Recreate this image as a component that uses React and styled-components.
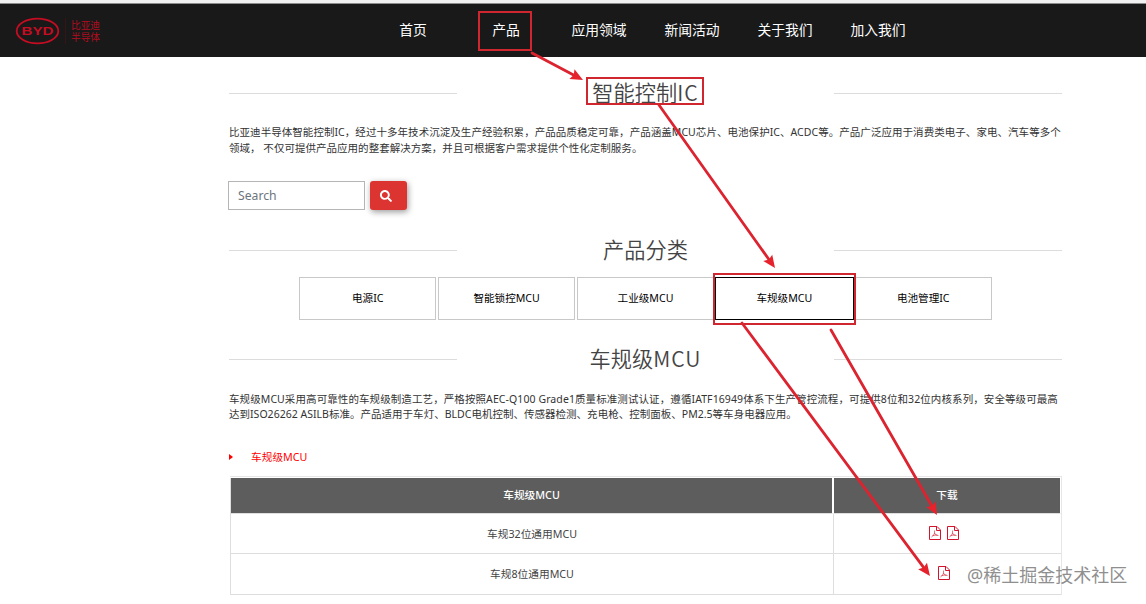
import React from "react";
import styled, { createGlobalStyle } from "styled-components";
import { FaSearch } from "react-icons/fa";

const GlobalStyle = createGlobalStyle`
  * {
    box-sizing: border-box;
  }

  body {
    margin: 0;
    background: #fff;
    overflow: hidden;
    font-family: "Noto Sans", "Noto Sans CJK SC", sans-serif;
    font-size: 10.5px;
    color: #333;
  }
`;

const Page = styled.div`
  position: relative;
  width: 1146px;
  height: 604px;
  overflow: hidden;
`;

const NavBar = styled.header`
  display: flex;
  align-items: center;
  height: 57px;
  padding-left: 15px;
  border-top: 3px solid #f1f1f1;
  background: #191919;
  box-shadow: inset 0 1px 0 #8c8c8c;
`;

const Brand = styled.a`
  display: flex;
  align-items: center;
  width: 351.5px;
  padding-top: 1px;
`;

const BrandName = styled.span`
  margin-left: 5px;
  padding: 2px 0 0 5px;
  border-left: 1px solid #38131a;
  font-size: 9.7px;
  line-height: 12px;
  color: #b00d20;
`;

const Menu = styled.nav`
  display: grid;
  grid-template-columns: repeat(6, 93px);
`;

const MenuItem = styled.a`
  text-align: center;
  font-size: 13.8px;
  line-height: 20px;
  color: #fff;
`;

const Container = styled.main`
  width: 833px;
  margin-left: 229px;
`;

const TitleRow = styled.div`
  display: grid;
  grid-template-columns: 228px 1fr 228px;
  align-items: center;
  height: 30px;
  margin-top: ${(props) => props.$top}px;
`;

const Rule = styled.span`
  height: 1px;
  background: #dcdcdc;
`;

const Title = styled.h2`
  margin: 0;
  padding-bottom: 2px;
  text-align: center;
  font-family: "Noto Sans CJK SC", sans-serif;
  font-size: 21.2px;
  font-weight: 350;
  line-height: 28px;
  color: #444;
`;

const Latin = styled.span`
  letter-spacing: 1px;
`;

const Text = styled.p`
  margin: ${(props) => props.$top}px 0 0;
  line-height: ${(props) => props.$line}px;
  white-space: nowrap;
`;

const Line = styled.span`
  display: block;
  letter-spacing: ${(props) => props.$spacing}px;
`;

const SearchForm = styled.div`
  display: flex;
  gap: 5px;
  margin: 25px 0 0 -1px;
`;

const SearchInput = styled.input`
  width: 137px;
  height: 29px;
  padding: 0 9px;
  border: 1px solid #b5b5b5;
  border-radius: 0;
  font-family: "Noto Sans", sans-serif;
  font-size: 12.2px;

  &::placeholder {
    color: #6c757d;
  }
`;

const SearchButton = styled.button`
  display: flex;
  align-items: center;
  width: 37px;
  height: 29px;
  padding: 0 0 0 10px;
  border: 0;
  border-radius: 3px;
  background: #dc3531;
  box-shadow: 1px 2px 6px rgba(0, 0, 0, 0.4);
  color: #fff;
`;

const Tabs = styled.div`
  display: grid;
  grid-template-columns: repeat(5, 1fr);
  gap: 1.4px;
  width: 693px;
  margin: 12px 0 0 70px;
`;

const Tab = styled.button`
  height: 43px;
  margin: 0 ${(props) => (props.$active ? "-1px" : 0)};
  padding: 0 0 2px;
  border: 1px solid ${(props) => (props.$active ? "#000" : "#c8c8c8")};
  background: #fff;
  font-family: inherit;
  font-size: 10.6px;
  color: #000;
`;

const SeriesLink = styled.a`
  display: flex;
  align-items: center;
  gap: 18px;
  height: 16px;
  margin-top: 26px;
  font-size: 10.7px;
  color: #f00;
`;

const Caret = styled.i`
  margin-top: 1px;
  border: 3px solid transparent;
  border-left: 4px solid #f00;
  border-right: 0;
`;

const Table = styled.div`
  display: grid;
  grid-template-columns: 603px 228px;
  grid-template-rows: 36px 40px 41px;
  width: 832px;
  margin: 12px 0 0 1px;
  padding-top: 1px;
  border-top: 1px solid #e6e6e6;
  border-right: 1px solid #e6e6e6;
`;

const Cell = styled.div`
  display: flex;
  align-items: center;
  justify-content: center;
  gap: 6px;
  padding-bottom: 1px;
  border-left: 1px solid #dedede;
  border-bottom: 1px solid #dedede;
  font-size: 10.7px;
  color: #444;
`;

const FileCell = styled(Cell)`
  padding: 0 8px 2px 0;
`;

const HeadCell = styled(Cell)`
  padding-bottom: 2px;
  border-left-color: ${(props) => (props.$first ? "#dedede" : "#fff")};
  border-right: 1px solid #fff;
  background: #5d5d5d;
  font-weight: 500;
  color: #fff;
`;

const Overlay = styled.svg`
  position: absolute;
  top: 0;
  left: 0;
  pointer-events: none;
`;

const Watermark = styled.span`
  position: absolute;
  left: 967px;
  top: 562px;
  font-size: 18px;
  line-height: 26px;
  white-space: nowrap;
  color: #8f8f8f;
`;

const menu = ["首页", "产品", "应用领域", "新闻活动", "关于我们", "加入我们"];
const tabs = ["电源IC", "智能锁控MCU", "工业级MCU", "车规级MCU", "电池管理IC"];
const products = [
  { name: "车规32位通用MCU", files: 2 },
  { name: "车规8位通用MCU", files: 1 },
];

const boxes = [
  [479, 12, 52, 38],
  [587, 78, 116, 26],
  [714, 274, 141, 50],
];
const arrows = [
  [532, 53, 583, 80],
  [659, 105, 775, 268],
  [742, 323, 930, 576],
  [831, 330, 937, 515],
];

function Logo() {
  return (
    <svg width="45" height="28" viewBox="0 0 45 28">
      <ellipse cx="22.5" cy="14" rx="20.8" ry="12.4" fill="none" stroke="#c40d22" strokeWidth="1.8" />
      <text
        x="6.5"
        y="17.600"
        textLength="32"
        lengthAdjust="spacingAndGlyphs"
        fontFamily="Liberation Sans"
        fontWeight="700"
        fontSize="11"
        fill="#c40d22"
      >
        BYD
      </text>
    </svg>
  );
}

function PdfIcon() {
  return (
    <svg width="12" height="14" viewBox="0 0 12 14" fill="none" stroke="#d4142c">
      <path d="M.5.5h7.5l3.500 3.500v9.500H.5z" />
      <path d="M7.500.5v4h4" />
      <path d="M5.500 4.500v2.500c0 1-1.500 3-3 4M5.500 7c.5 1.500 2 2.500 4 2.500M3.500 9.800c1.500-.5 3-.8 5-.8" strokeWidth=".6" />
    </svg>
  );
}

function SectionTitle({ top, latin, children }) {
  return (
    <TitleRow $top={top}>
      <Rule />
      <Title>
        {children}
        {latin && <Latin>{latin}</Latin>}
      </Title>
      <Rule />
    </TitleRow>
  );
}

function Arrow({ points }) {
  const [x1, y1, x2, y2] = points;
  const length = Math.hypot(x2 - x1, y2 - y1);
  const angle = (Math.atan2(y2 - y1, x2 - x1) * 180) / Math.PI;

  return (
    <g transform={`translate(${x1} ${y1}) rotate(${angle})`}>
      <path d={`M0 0H${length - 8}`} stroke="#dc2430" strokeWidth="2.8" strokeLinecap="round" />
      <path d={`M${length} 0l-12.500-5.500 2 5.500-2 5.500z`} fill="#e6222c" />
    </g>
  );
}

export default function App() {
  return (
    <Page>
      <GlobalStyle />
      <NavBar>
        <Brand>
          <Logo />
          <BrandName>
            比亚迪
            <br />
            半导体
          </BrandName>
        </Brand>
        <Menu>
          {menu.map((item) => (
            <MenuItem key={item}>{item}</MenuItem>
          ))}
        </Menu>
      </NavBar>

      <Container>
        <SectionTitle top={21} latin="IC">
          智能控制
        </SectionTitle>
        <Text $top={16} $line={16}>
          <Line $spacing={0.05}>
            比亚迪半导体智能控制IC，经过十多年技术沉淀及生产经验积累，产品品质稳定可靠，产品涵盖MCU芯片、电池保护IC、ACDC等。产品广泛应用于消费类电子、家电、汽车等多个
          </Line>
          <Line $spacing={0.03}>
            领域， 不仅可提供产品应用的整套解决方案，并且可根据客户需求提供个性化定制服务。
          </Line>
        </Text>

        <SearchForm>
          <SearchInput placeholder="Search" />
          <SearchButton>
            <FaSearch size={12} />
          </SearchButton>
        </SearchForm>

        <SectionTitle top={25}>产品分类</SectionTitle>
        <Tabs>
          {tabs.map((tab) => (
            <Tab key={tab} $active={tab === "车规级MCU"}>
              {tab}
            </Tab>
          ))}
        </Tabs>

        <SectionTitle top={24} latin="MCU">
          车规级
        </SectionTitle>
        <Text $top={18} $line={15}>
          <Line $spacing={0.09}>
            车规级MCU采用高可靠性的车规级制造工艺，严格按照AEC-Q100 Grade1质量标准测试认证，遵循IATF16949体系下生产管控流程，可提供8位和32位内核系列，安全等级可最高
          </Line>
          <Line $spacing={0.02}>
            达到ISO26262 ASILB标准。产品适用于车灯、BLDC电机控制、传感器检测、充电枪、控制面板、PM2.5等车身电器应用。
          </Line>
        </Text>

        <SeriesLink>
          <Caret />
          车规级MCU
        </SeriesLink>

        <Table>
          <HeadCell $first>车规级MCU</HeadCell>
          <HeadCell>下载</HeadCell>
          {products.map((product) => (
            <React.Fragment key={product.name}>
              <Cell>{product.name}</Cell>
              <FileCell>
                {Array.from({ length: product.files }, (_, i) => (
                  <PdfIcon key={i} />
                ))}
              </FileCell>
            </React.Fragment>
          ))}
        </Table>
      </Container>

      <Overlay width="1146" height="604">
        {boxes.map(([x, y, width, height]) => (
          <rect key={x} x={x} y={y} width={width} height={height} fill="none" stroke="#d0262f" strokeWidth="2" />
        ))}
        {arrows.map((points) => (
          <Arrow key={points[0]} points={points} />
        ))}
      </Overlay>
      <Watermark>@稀土掘金技术社区</Watermark>
    </Page>
  );
}
